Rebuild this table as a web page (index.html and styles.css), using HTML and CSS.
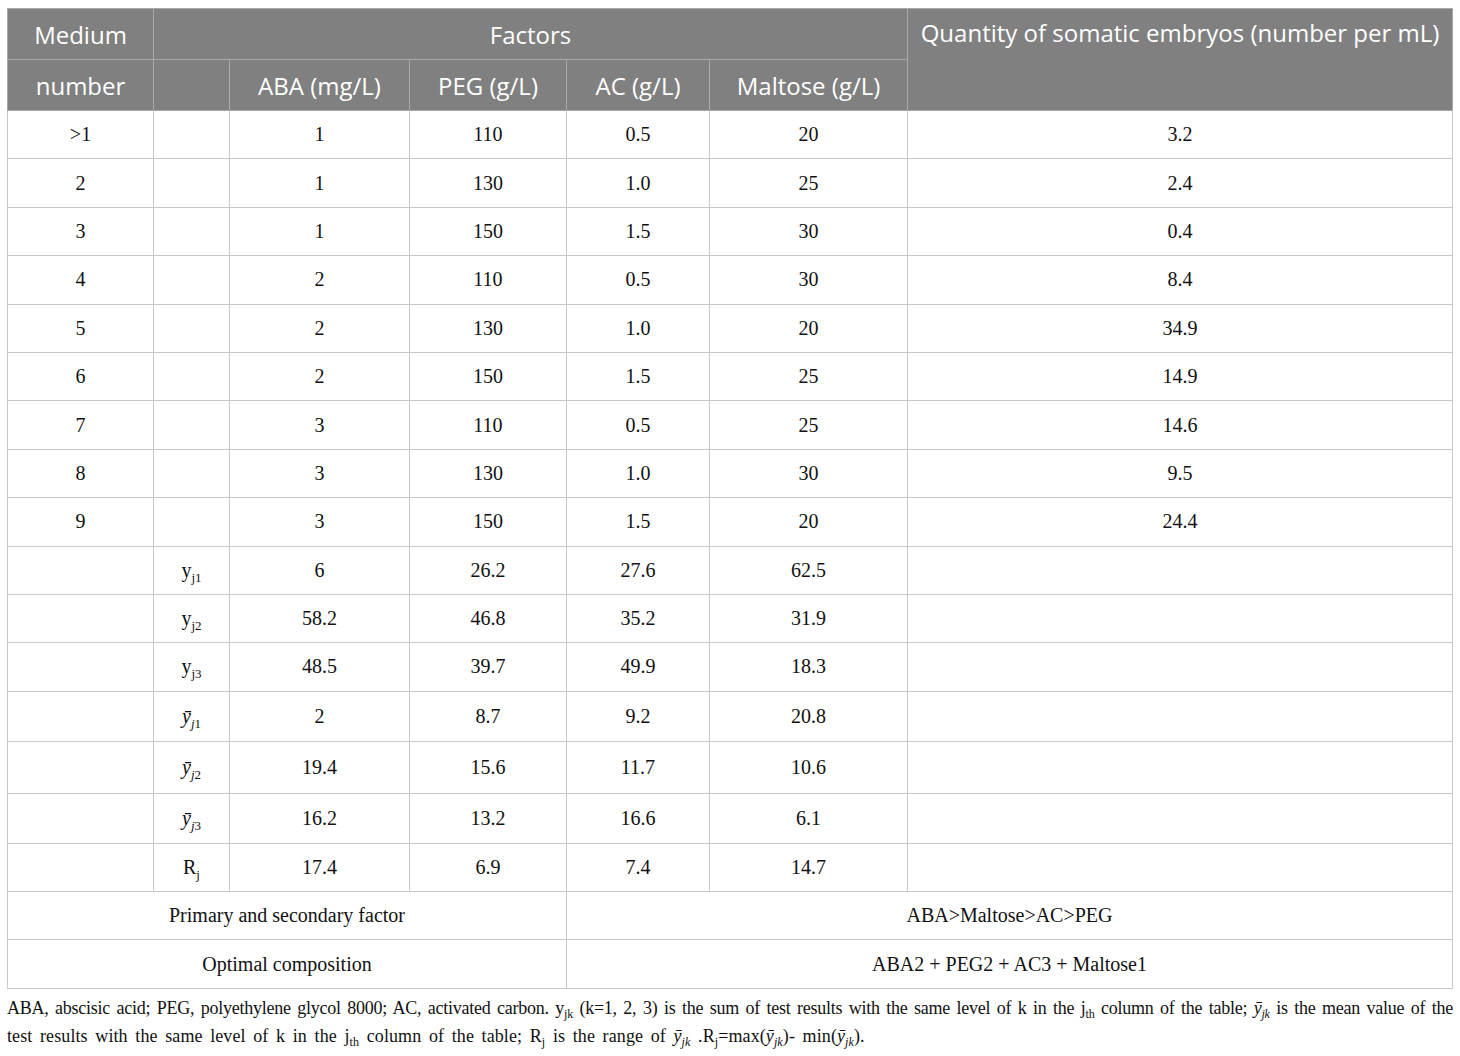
FILE: index.html
```html
<!DOCTYPE html>
<html lang="en">
<head>
  <meta charset="UTF-8">
  <title>Orthogonal test of somatic embryo maturation</title>
  <link rel="stylesheet" href="styles.css">
</head>
<body>
  <div class="wrap">
    <table class="data">
      <colgroup>
        <col style="width:146px">
        <col style="width:76px">
        <col style="width:180px">
        <col style="width:157px">
        <col style="width:143px">
        <col style="width:198px">
        <col>
      </colgroup>
      <thead>
        <tr class="h1">
          <th>Medium</th>
          <th colspan="5">Factors</th>
          <th rowspan="2" class="top">Quantity of somatic embryos (number per mL)</th>
        </tr>
        <tr class="h2">
          <th>number</th>
          <th></th>
          <th>ABA (mg/L)</th>
          <th>PEG (g/L)</th>
          <th>AC (g/L)</th>
          <th>Maltose (g/L)</th>
        </tr>
      </thead>
      <tbody>
        <tr><td>&gt;1</td><td></td><td>1</td><td>110</td><td>0.5</td><td>20</td><td>3.2</td></tr>
        <tr><td>2</td><td></td><td>1</td><td>130</td><td>1.0</td><td>25</td><td>2.4</td></tr>
        <tr><td>3</td><td></td><td>1</td><td>150</td><td>1.5</td><td>30</td><td>0.4</td></tr>
        <tr><td>4</td><td></td><td>2</td><td>110</td><td>0.5</td><td>30</td><td>8.4</td></tr>
        <tr><td>5</td><td></td><td>2</td><td>130</td><td>1.0</td><td>20</td><td>34.9</td></tr>
        <tr><td>6</td><td></td><td>2</td><td>150</td><td>1.5</td><td>25</td><td>14.9</td></tr>
        <tr><td>7</td><td></td><td>3</td><td>110</td><td>0.5</td><td>25</td><td>14.6</td></tr>
        <tr><td>8</td><td></td><td>3</td><td>130</td><td>1.0</td><td>30</td><td>9.5</td></tr>
        <tr><td>9</td><td></td><td>3</td><td>150</td><td>1.5</td><td>20</td><td>24.4</td></tr>
        <tr><td></td><td>y<sub>j1</sub></td><td>6</td><td>26.2</td><td>27.6</td><td>62.5</td><td></td></tr>
        <tr><td></td><td>y<sub>j2</sub></td><td>58.2</td><td>46.8</td><td>35.2</td><td>31.9</td><td></td></tr>
        <tr><td></td><td>y<sub>j3</sub></td><td>48.5</td><td>39.7</td><td>49.9</td><td>18.3</td><td></td></tr>
        <tr class="bar"><td></td><td><i>ȳ<sub>j</sub></i><sub>1</sub></td><td>2</td><td>8.7</td><td>9.2</td><td>20.8</td><td></td></tr>
        <tr class="bar tall"><td></td><td><i>ȳ<sub>j</sub></i><sub>2</sub></td><td>19.4</td><td>15.6</td><td>11.7</td><td>10.6</td><td></td></tr>
        <tr class="bar"><td></td><td><i>ȳ<sub>j</sub></i><sub>3</sub></td><td>16.2</td><td>13.2</td><td>16.6</td><td>6.1</td><td></td></tr>
        <tr><td></td><td>R<sub>j</sub></td><td>17.4</td><td>6.9</td><td>7.4</td><td>14.7</td><td></td></tr>
        <tr><td colspan="4">Primary and secondary factor</td><td colspan="3">ABA&gt;Maltose&gt;AC&gt;PEG</td></tr>
        <tr><td colspan="4">Optimal composition</td><td colspan="3">ABA2 + PEG2 + AC3 + Maltose1</td></tr>
      </tbody>
    </table>
    <div class="note">
      <p class="line">ABA, abscisic acid; PEG, polyethylene glycol 8000; AC, activated carbon. y<sub>jk</sub> (k=1, 2, 3) is the sum of test results with the same level of k in the j<sub>th</sub> column of the table; <i>ȳ<sub>jk</sub></i> is the mean value of the</p>
      <p class="last">test results with the same level of k in the j<sub>th</sub> column of the table; R<sub>j</sub> is the range of <i>ȳ<sub>jk</sub></i> .R<sub>j</sub>=max(<i>ȳ<sub>jk</sub></i>)- min(<i>ȳ<sub>jk</sub></i>).</p>
    </div>
  </div>
</body>
</html>
```

FILE: styles.css
```css
body {
  margin: 0;
  padding: 8px 7px 0 7px;
  background: #ffffff;
  color: #111111;
  font-family: "Liberation Serif", "Times New Roman", serif;
}
.wrap {
  width: 1446px;
}
.data {
  width: 1446px;
  border-collapse: collapse;
  table-layout: fixed;
  border: 1px solid #c6c6c6;
}
.data th {
  background: #808080;
  color: #ffffff;
  font-family: "Open Sans", "Noto Sans", sans-serif;
  font-weight: normal;
  font-size: 24px;
  height: 50px;
  padding: 0;
  text-align: center;
  border: 1px solid #a8a8a8;
}
.data th.top {
  vertical-align: top;
  padding-top: 7px;
}
.data td {
  height: 47.4px;
  padding: 0;
  text-align: center;
  font-size: 20px;
  border: 1px solid #c8c8c8;
}
.data tr.bar td {
  height: 49px;
}
.data tr.tall td {
  height: 51px;
}
.data sub {
  font-size: 13px;
  vertical-align: -5px;
  line-height: 0;
}
.note {
  font-size: 18px;
  line-height: 28px;
  margin-top: 5px;
  letter-spacing: -0.25px;
}
.note p {
  margin: 0;
  text-align: justify;
}
.note p.line {
  text-align-last: justify;
}
.note p.last {
  letter-spacing: 0.1px;
  word-spacing: 3px;
}
.note sub {
  font-size: 12px;
  vertical-align: -4px;
  line-height: 0;
}
```
